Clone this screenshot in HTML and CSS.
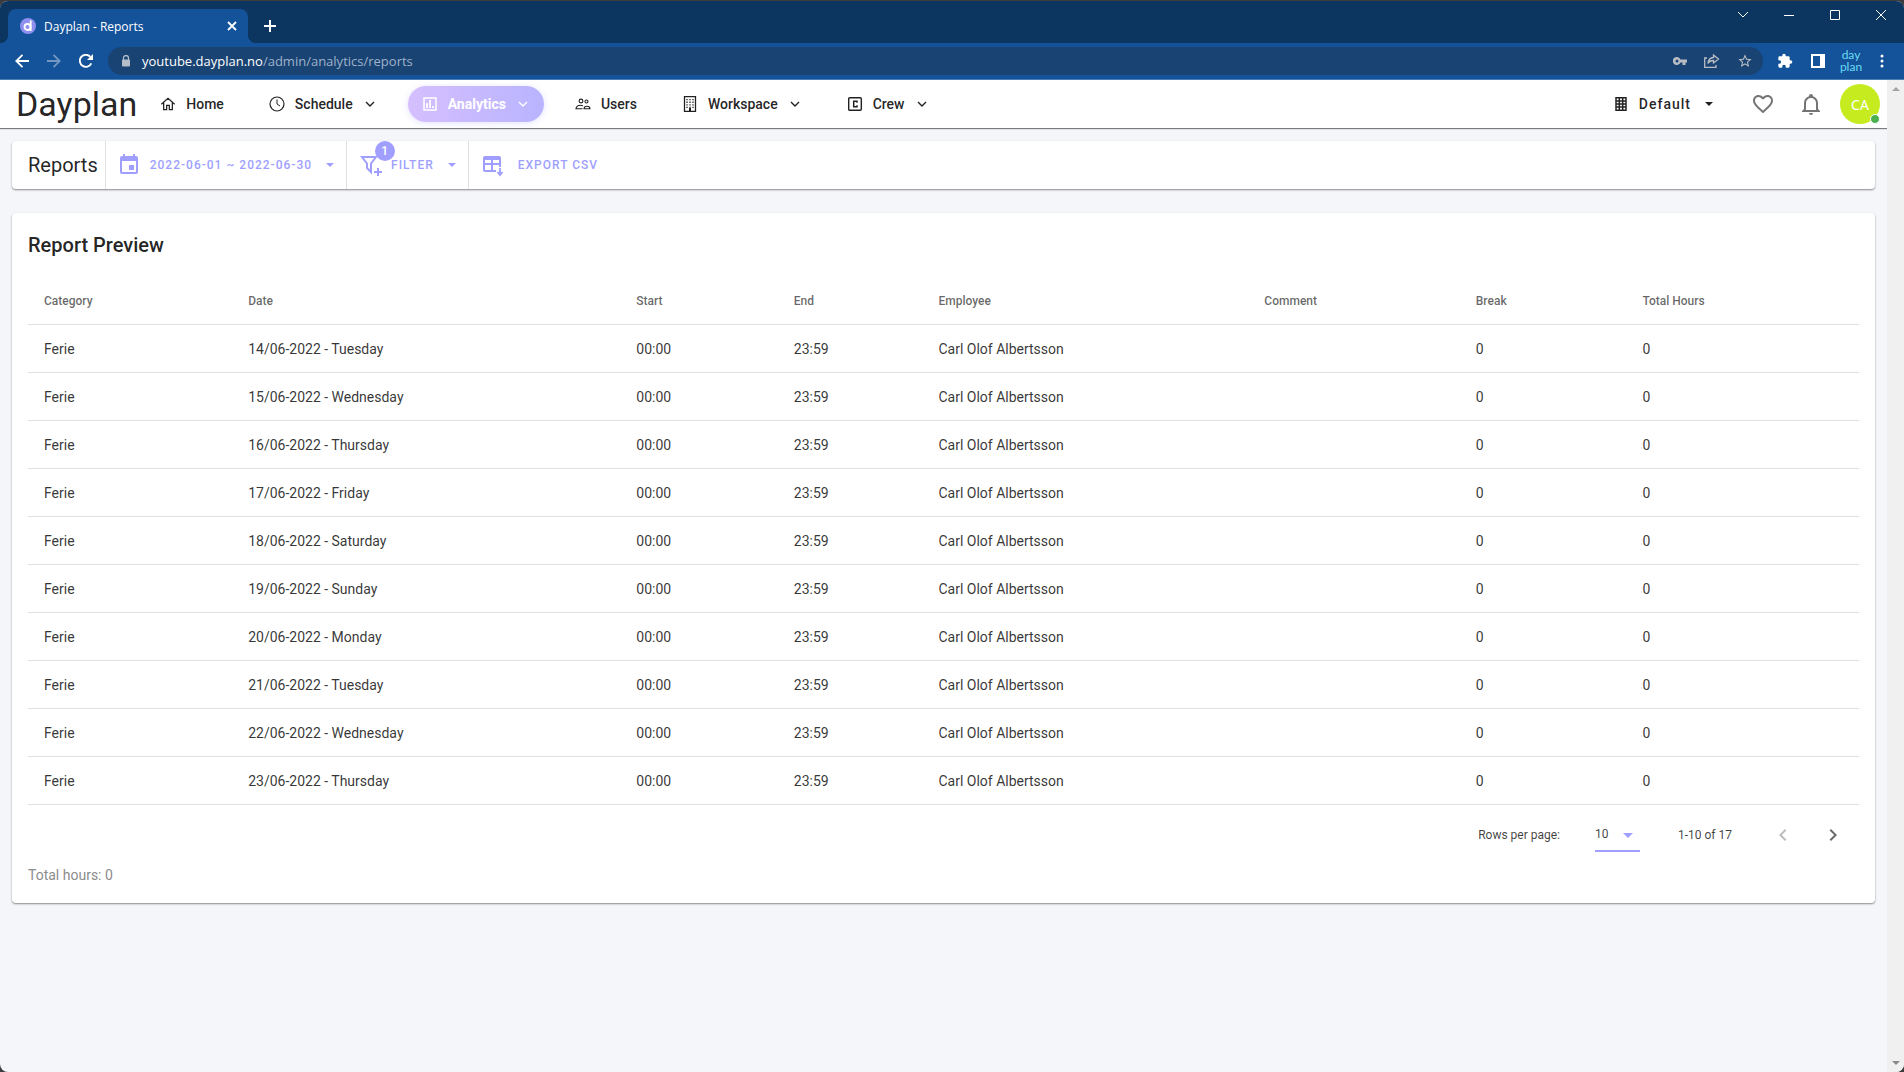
FILE: index.html
```html
<!DOCTYPE html>
<html lang="en">

<head>
    <meta charset="UTF-8">
    <meta name="viewport" content="width=device-width, initial-scale=1.0">
    <title>Dayplan - Reports</title>
    <link rel="stylesheet" href="styles.css">
</head>

<body>
    <div class="window">
        <!-- Browser tabs -->
        <div class="tab-strip">
            <div class="tab">
                <svg class="favicon" viewBox="0 0 16 16"><circle cx="8" cy="8" r="8" fill="#8f8ff0"/><circle cx="7.500" cy="9" r="3" fill="none" stroke="#fff" stroke-width="1.800"/><path d="M10.700 2.500v10.500" stroke="#fff" stroke-width="1.800"/></svg>
                <span class="tab-title">Dayplan - Reports</span>
                <button class="chrome-btn tab-close" aria-label="Close tab"><svg width="10" height="10" viewBox="0 0 10 10"><path d="M1 1l8 8M9 1l-8 8" stroke="currentColor" stroke-width="1.800"/></svg></button>
            </div>
            <button class="chrome-btn new-tab" aria-label="New tab"><svg width="12" height="12" viewBox="0 0 12 12"><path d="M6 0v12M0 6h12" stroke="currentColor" stroke-width="2"/></svg></button>
            <div class="window-controls">
                <button class="chrome-btn" aria-label="Search tabs"><svg width="12" height="12" viewBox="0 0 12 12"><path d="M1 3l5 5 5-5" fill="none" stroke="currentColor"/></svg></button>
                <button class="chrome-btn" aria-label="Minimize"><svg width="10" height="10" viewBox="0 0 10 10"><path d="M0 5.500h10" stroke="currentColor"/></svg></button>
                <button class="chrome-btn" aria-label="Maximize"><svg width="10" height="10" viewBox="0 0 10 10"><path d="M.5.5h9v9h-9z" fill="none" stroke="currentColor"/></svg></button>
                <button class="chrome-btn" aria-label="Close"><svg width="10" height="10" viewBox="0 0 10 10"><path d="M0 0l10 10M10 0L0 10" stroke="currentColor"/></svg></button>
            </div>
        </div>

        <!-- Address bar -->
        <div class="browser-bar">
            <button class="chrome-btn" aria-label="Back"><svg width="14" height="14" viewBox="0 0 14 14"><path d="M14 7H1.500M7.500.8L1.300 7l6.200 6.200" fill="none" stroke="currentColor" stroke-width="1.800"/></svg></button>
            <button class="chrome-btn faded" aria-label="Forward"><svg width="14" height="14" viewBox="0 0 14 14"><path d="M0 7h12.500M6.500.8L12.700 7l-6.200 6.200" fill="none" stroke="currentColor" stroke-width="1.800"/></svg></button>
            <button class="chrome-btn" aria-label="Reload"><svg width="14" height="14" viewBox="0 0 14 14"><path d="M12.300 9.300A6 6 0 1 1 11.300 2.800" fill="none" stroke="currentColor" stroke-width="1.900"/><path d="M14 0v6H8z" fill="currentColor"/></svg></button>
            <div class="address">
                <svg width="10" height="12" viewBox="0 0 10 12"><path d="M2.500 5V3a2.500 2.500 0 0 1 5 0v2" fill="none" stroke="#b4bdc8" stroke-width="1.300"/><rect x="1" y="4.500" width="8" height="7" rx="1" fill="#b4bdc8"/></svg>
                <span class="url"><b>youtube.dayplan.no</b>/admin/analytics/reports</span>
                <div class="address-icons">
                    <button class="chrome-btn" aria-label="Passwords"><svg width="14" height="8" viewBox="0 0 14 8"><path fill="currentColor" fill-rule="evenodd" d="M7.500 2.500A4 4 0 1 0 7.500 5.500H9.500V8h3V5.500H14v-3zM4 2.500a1.500 1.500 0 1 1 0 3 1.500 1.500 0 0 1 0-3z"/></svg></button>
                    <button class="chrome-btn" aria-label="Share"><svg width="16" height="14" viewBox="0 0 16 14"><path d="M3 4H.7v9.300H12V11M9.500 1l5 4-5 4V6.500Q5.500 6.500 4 9.500 4.500 3.800 9.500 3.500z" fill="none" stroke="currentColor" stroke-width="1.300"/></svg></button>
                    <button class="chrome-btn" aria-label="Bookmark"><svg width="16" height="16" viewBox="0 0 24 24"><path fill="currentColor" d="M12 15.390l-3.760 2.270.99-4.280-3.320-2.880 4.380-.37L12 6.090l1.710 4.040 4.380.37-3.320 2.880.99 4.280M22 9.240l-7.190-.61L12 2 9.190 8.630 2 9.240l5.450 4.730L5.820 21 12 17.270 18.180 21l-1.640-7.030L22 9.240z"/></svg></button>
                </div>
            </div>
            <button class="chrome-btn ext" aria-label="Extensions"><svg width="16" height="16" viewBox="0 0 24 24"><path fill="currentColor" d="M20.500 11H19V7a2 2 0 0 0-2-2h-4V3.500a2.500 2.500 0 0 0-5 0V5H4a2 2 0 0 0-2 2v3.800h1.500a2.700 2.700 0 0 1 0 5.400H2V20a2 2 0 0 0 2 2h3.800v-1.500a2.700 2.700 0 0 1 5.400 0V22H17a2 2 0 0 0 2-2v-4h1.500a2.500 2.500 0 0 0 0-5z"/></svg></button>
            <button class="chrome-btn" aria-label="Side panel"><svg width="14" height="14" viewBox="0 0 14 14"><path fill="currentColor" fill-rule="evenodd" d="M0 0h14v14H0zM2 2v10h7V2z"/></svg></button>
            <button class="chrome-btn dayplan-ext" aria-label="Dayplan extension"><span>day</span><span>plan</span></button>
            <button class="chrome-btn" aria-label="Menu"><svg width="4" height="14" viewBox="0 0 4 14"><path d="M2 2v.01M2 7v.01M2 12v.01" stroke="currentColor" stroke-width="3" stroke-linecap="round"/></svg></button>
        </div>

        <div class="viewport">
            <div class="app">
                <header class="app-bar">
                    <div class="logo">Dayplan</div>
                    <nav class="nav">
                        <a class="nav-item" href="#"><svg class="icon-sm" viewBox="0 0 24 24"><path fill="none" stroke="currentColor" stroke-width="1.900" d="M2 12.500L12 3.500l10 9M5.500 10v10.500H10V14h4v6.500h4.500V10"/></svg>Home</a>
                        <a class="nav-item" href="#"><svg class="icon-sm" viewBox="0 0 16 16"><circle cx="8" cy="8" r="7" fill="none" stroke="currentColor" stroke-width="1.200"/><path d="M8 3.500V8l3 2" fill="none" stroke="currentColor"/></svg>Schedule<svg class="chevron" viewBox="0 0 10 6"><path d="M1 1l4 4 4-4"/></svg></a>
                        <a class="nav-item active" href="#"><svg class="icon-sm" viewBox="0 0 16 16"><path d="M2 2h12v12H2z" fill="none" stroke="currentColor" stroke-width="1.500"/><path d="M5 12V7M8 12V4M11 12v-2" stroke="currentColor" stroke-width="1.800"/></svg>Analytics<svg class="chevron" viewBox="0 0 10 6"><path d="M1 1l4 4 4-4"/></svg></a>
                        <a class="nav-item" href="#"><svg class="icon-sm" viewBox="0 0 16 16"><g fill="none" stroke="currentColor" stroke-width="1.100"><circle cx="6" cy="5" r="1.900"/><circle cx="11.500" cy="5.500" r="1.500"/><path d="M8 9.800q-1.200-.6-2.500-.6-4 0-4.500 3.500h6.500M9 12.700q0-2.500 3-2.500t3 2.500z"/></g></svg>Users</a>
                        <a class="nav-item" href="#"><svg class="icon-sm" viewBox="0 0 16 16"><path d="M2.500.700h11v14.600h-11z" fill="none" stroke="currentColor" stroke-width="1.300"/><path d="M5 3v9M8 3v9M11 3v9" stroke="currentColor" stroke-width="1.300" stroke-dasharray="1.300 1.300"/><path d="M8 12v3" stroke="currentColor" stroke-width="2"/></svg>Workspace<svg class="chevron" viewBox="0 0 10 6"><path d="M1 1l4 4 4-4"/></svg></a>
                        <a class="nav-item" href="#"><svg class="icon-sm" viewBox="0 0 16 16"><rect x="1.700" y="1.700" width="12.600" height="12.600" rx="1" fill="none" stroke="currentColor" stroke-width="1.400"/><path d="M10 6.800V5.200H6.700v5.600H10V9.200" fill="none" stroke="currentColor" stroke-width="1.500"/></svg>Crew<svg class="chevron" viewBox="0 0 10 6"><path d="M1 1l4 4 4-4"/></svg></a>
                    </nav>
                    <div class="app-actions">
                        <button class="workspace-btn"><svg width="12" height="14" viewBox="0 0 12 14"><path fill="none" stroke="currentColor" stroke-width="1.500" d="M1 .8h10v12.400H1zM4.300 1v12M7.700 1v12M1 4h10M1 7h10M1 10h10"/></svg>Default<svg class="caret dark" viewBox="0 0 8 4"><path d="M0 0h8L4 4z"/></svg></button>
                        <button class="icon-btn" aria-label="Favorites"><svg width="24" height="24" viewBox="0 0 24 24"><path fill="currentColor" d="M12.100 18.550l-.100.100-.110-.100C7.140 14.240 4 11.390 4 8.500 4 6.500 5.500 5 7.500 5c1.540 0 3.040 1 3.570 2.360h1.860C13.460 6 14.960 5 16.500 5c2 0 3.500 1.500 3.500 3.500 0 2.890-3.140 5.740-7.900 10.050M16.500 3c-1.740 0-3.410.810-4.500 2.080C10.910 3.810 9.240 3 7.500 3 4.420 3 2 5.410 2 8.500c0 3.770 3.400 6.860 8.550 11.530L12 21.350l1.450-1.320C18.600 15.360 22 12.270 22 8.500 22 5.410 19.580 3 16.500 3z"/></svg></button>
                        <button class="icon-btn" aria-label="Notifications"><svg width="24" height="24" viewBox="0 0 24 24"><path fill="currentColor" d="M10 21h4a2 2 0 0 1-4 0m11-2v1H3v-1l2-2v-6c0-3.100 2.030-5.830 5-6.710V4a2 2 0 0 1 4 0v.29c2.970.88 5 3.610 5 6.710v6l2 2m-4-8a5 5 0 0 0-10 0v7h10v-7z"/></svg></button>
                        <button class="avatar" aria-label="Account">CA<span class="status"></span></button>
                    </div>
                </header>

                <main class="content">
                    <section class="toolbar">
                        <h1 class="toolbar-title">Reports</h1>
                        <button class="tool-btn date-btn"><svg width="24" height="24" viewBox="0 0 24 24"><path fill="currentColor" d="M19 19H5V8h14m-3-7v2H8V1H6v2H5a2 2 0 0 0-2 2v14a2 2 0 0 0 2 2h14a2 2 0 0 0 2-2V5a2 2 0 0 0-2-2h-1V1m-1 11h-5v5h5v-5z"/></svg>2022-06-01 ~ 2022-06-30<svg class="caret" viewBox="0 0 8 4"><path d="M0 0h8L4 4z"/></svg></button>
                        <button class="tool-btn filter-btn">
                            <span class="badge-wrap"><svg width="24" height="24" viewBox="0 0 24 24"><path fill="none" stroke="currentColor" stroke-width="2" d="M3 4h14l-5 6.500V19l-4-4v-4.500z"/><path d="M19 15v8M15 19h8" stroke="currentColor" stroke-width="2"/></svg><span class="badge">1</span></span>FILTER<svg class="caret" viewBox="0 0 8 4"><path d="M0 0h8L4 4z"/></svg></button>
                        <button class="tool-btn export-btn"><svg width="24" height="24" viewBox="0 0 24 24"><path fill="currentColor" fill-rule="evenodd" d="M4 3h14a2 2 0 0 1 2 2v9h-2v-2h-6v5h3v2H4a2 2 0 0 1-2-2V5a2 2 0 0 1 2-2zm0 4v3h6V7zm8 0v3h6V7zM4 12v5h6v-5z"/><path d="M19 15v6M16.500 19l2.500 3 2.500-3" fill="none" stroke="currentColor" stroke-width="1.800"/></svg>EXPORT CSV</button>
                    </section>

                    <section class="card">
                        <h2 class="card-title">Report Preview</h2>
                        <table class="report-table">
                            <thead>
                                <tr><th class="col-category">Category</th><th class="col-date">Date</th><th class="col-start">Start</th><th class="col-end">End</th><th class="col-employee">Employee</th><th class="col-comment">Comment</th><th class="col-break">Break</th><th class="col-total">Total Hours</th></tr>
                            </thead>
                            <tbody>
                                <tr><td>Ferie</td><td>14/06-2022 - Tuesday</td><td>00:00</td><td>23:59</td><td>Carl Olof Albertsson</td><td></td><td>0</td><td>0</td></tr>
                                <tr><td>Ferie</td><td>15/06-2022 - Wednesday</td><td>00:00</td><td>23:59</td><td>Carl Olof Albertsson</td><td></td><td>0</td><td>0</td></tr>
                                <tr><td>Ferie</td><td>16/06-2022 - Thursday</td><td>00:00</td><td>23:59</td><td>Carl Olof Albertsson</td><td></td><td>0</td><td>0</td></tr>
                                <tr><td>Ferie</td><td>17/06-2022 - Friday</td><td>00:00</td><td>23:59</td><td>Carl Olof Albertsson</td><td></td><td>0</td><td>0</td></tr>
                                <tr><td>Ferie</td><td>18/06-2022 - Saturday</td><td>00:00</td><td>23:59</td><td>Carl Olof Albertsson</td><td></td><td>0</td><td>0</td></tr>
                                <tr><td>Ferie</td><td>19/06-2022 - Sunday</td><td>00:00</td><td>23:59</td><td>Carl Olof Albertsson</td><td></td><td>0</td><td>0</td></tr>
                                <tr><td>Ferie</td><td>20/06-2022 - Monday</td><td>00:00</td><td>23:59</td><td>Carl Olof Albertsson</td><td></td><td>0</td><td>0</td></tr>
                                <tr><td>Ferie</td><td>21/06-2022 - Tuesday</td><td>00:00</td><td>23:59</td><td>Carl Olof Albertsson</td><td></td><td>0</td><td>0</td></tr>
                                <tr><td>Ferie</td><td>22/06-2022 - Wednesday</td><td>00:00</td><td>23:59</td><td>Carl Olof Albertsson</td><td></td><td>0</td><td>0</td></tr>
                                <tr><td>Ferie</td><td>23/06-2022 - Thursday</td><td>00:00</td><td>23:59</td><td>Carl Olof Albertsson</td><td></td><td>0</td><td>0</td></tr>
                            </tbody>
                        </table>
                        <div class="table-footer">
                            <label for="rows">Rows per page:</label>
                            <div class="select-wrap">
                                <select id="rows" class="rows-select">
                                    <option>10</option>
                                    <option>25</option>
                                    <option>50</option>
                                </select>
                                <svg class="select-caret" viewBox="0 0 10 5"><path d="M0 0h10L5 5z"/></svg>
                            </div>
                            <span class="range">1-10 of 17</span>
                            <button class="page-btn" aria-label="Previous page" disabled><svg width="24" height="24" viewBox="0 0 24 24"><path fill="currentColor" d="M15.410 16.580L10.830 12l4.580-4.590L14 6l-6 6 6 6 1.410-1.420z"/></svg></button>
                            <button class="page-btn" aria-label="Next page"><svg width="24" height="24" viewBox="0 0 24 24"><path fill="currentColor" d="M8.590 16.580L13.170 12 8.590 7.410 10 6l6 6-6 6-1.410-1.420z"/></svg></button>
                        </div>
                        <p class="total">Total hours: 0</p>
                    </section>
                </main>
            </div>
            <div class="scrollbar">
                <svg width="8" height="4" viewBox="0 0 8 4"><path d="M0 4h8L4 0z" fill="#a3a3a3"/></svg>
                <svg width="8" height="4" viewBox="0 0 8 4"><path d="M0 0h8L4 4z" fill="#8a8a8a"/></svg>
            </div>
        </div>
    </div>
</body>

</html>
```
FILE: styles.css
```css
* {
    box-sizing: border-box;
}

body {
    margin: 0;
    background: #3c3c3c;
    color: rgba(0, 0, 0, 0.87);
    font-family: Roboto, sans-serif;
    font-size: 14px;
}

button {
    border: 0;
    padding: 0;
    background: none;
    color: inherit;
    font: inherit;
    display: flex;
    align-items: center;
}

svg {
    flex: none;
}

.window {
    display: flex;
    flex-direction: column;
    min-height: 100vh;
    border-radius: 8px;
    border-top: 1px solid #3c3c3c;
    overflow: hidden;
    background: #f5f6fa;
}

/* Browser frame */
.tab-strip {
    display: flex;
    align-items: center;
    height: 42px;
    padding-left: 8px;
    background: #0c355f;
    color: #fff;
}

.tab {
    position: relative;
    display: flex;
    align-items: center;
    align-self: flex-end;
    width: 240px;
    height: 34px;
    padding: 0 11px 0 12px;
    border-radius: 8px 8px 0 0;
    background: #14529a;
    font: 12px "Open Sans", sans-serif;
}

/* Curved feet of the tab */
.tab::before,
.tab::after {
    content: "";
    position: absolute;
    bottom: 0;
    width: 8px;
    height: 8px;
}

.tab::before {
    right: 100%;
    background: radial-gradient(circle at 0 0, transparent 8px, #14529a 8px);
}

.tab::after {
    left: 100%;
    background: radial-gradient(circle at 100% 0, transparent 8px, #14529a 8px);
}

.favicon {
    width: 16px;
    height: 16px;
    margin-right: 8px;
}

.tab-title {
    flex: 1;
}

.new-tab {
    margin-left: 16px;
    margin-top: 8px;
}

.window-controls {
    display: flex;
    align-self: flex-start;
    margin-left: auto;
}

.window-controls .chrome-btn {
    justify-content: center;
    width: 46px;
    height: 28px;
}

.browser-bar {
    display: flex;
    align-items: center;
    height: 37px;
    padding: 0 20px 0 15px;
    gap: 18px;
    background: #14529a;
    border-bottom: 1px solid #4a7db5;
    color: #fff;
}

.faded {
    color: #7397c2;
}

.address {
    display: flex;
    align-items: center;
    flex: 1;
    height: 28px;
    margin-left: -3px;
    padding: 0 10px 0 13px;
    border-radius: 14px;
    background: #194373;
    color: #9fb2c9;
}

.url {
    margin-left: 11px;
    font: 13px "Open Sans", sans-serif;
}

.url b {
    color: #fff;
    font-weight: 400;
}

.address-icons {
    display: flex;
    align-items: center;
    gap: 17px;
    margin-left: auto;
    color: #b9bdc3;
}

.ext {
    margin-left: -4px;
}

.dayplan-ext {
    flex-direction: column;
    width: 22px;
    margin: 0 0 0 -3px;
    color: #6adcf5;
    font: 12px/12px Lato, sans-serif;
}

/* App */
.viewport {
    display: flex;
    flex: 1;
}

.app {
    flex: 1;
    min-width: 0;
}

.scrollbar {
    display: flex;
    flex-direction: column;
    align-items: center;
    justify-content: space-between;
    width: 17px;
    padding: 7px 0;
    background: #f0f0f0;
}

.app-bar {
    display: flex;
    align-items: center;
    height: 48px;
    padding: 0 7px 0 16px;
    background: #fff;
    box-shadow: 0 1px 1px rgba(0, 0, 0, 0.5);
}

.logo {
    font-size: 34px;
    line-height: 48px;
}

.nav {
    display: flex;
    align-items: center;
    gap: 17px;
    margin-left: 9px;
}

.nav-item {
    display: flex;
    align-items: center;
    height: 36px;
    padding: 0 14px;
    border-radius: 18px;
    color: inherit;
    font-weight: 500;
    text-decoration: none;
}

.icon-sm {
    width: 16px;
    height: 16px;
    margin-right: 10px;
}

.chevron {
    width: 10px;
    height: 6px;
    margin: 0 2px 0 12px;
    fill: none;
    stroke: currentColor;
    stroke-width: 1.4;
}

.nav-item.active {
    background: linear-gradient(90deg, #d5bffe, #b9b4ff);
    box-shadow: 0 1px 6px rgba(185, 180, 255, 0.4);
    color: #fff;
    font-weight: 700;
}

.app-actions {
    display: flex;
    align-items: center;
    margin-left: auto;
}

.workspace-btn {
    gap: 12px;
    margin-right: 38px;
    letter-spacing: 1px;
    font-weight: 500;
}

.caret {
    width: 8px;
    height: 4px;
    margin-left: 5px;
    fill: currentColor;
}

.caret.dark {
    margin-left: 2px;
}

.icon-btn {
    margin-right: 24px;
    color: #757575;
}

.avatar {
    position: relative;
    justify-content: center;
    width: 40px;
    height: 40px;
    margin-left: -7px;
    border-radius: 50%;
    background: #c6ec1f;
    color: #fff;
    font: 14px "Noto Sans", sans-serif;
}

.status {
    position: absolute;
    right: 0;
    bottom: 0;
    width: 10px;
    height: 10px;
    border: 1px solid #fff;
    border-radius: 50%;
    background: #4caf50;
}

.content {
    padding: 13px 12px;
}

.toolbar,
.card {
    border-radius: 4px;
    background: #fff;
    box-shadow: 0 1px 2px rgba(0, 0, 0, 0.45);
}

.toolbar {
    display: flex;
    height: 48px;
}

.toolbar-title {
    margin: 0;
    padding: 0 7px 0 16px;
    font-size: 20px;
    font-weight: 400;
    line-height: 48px;
}

.tool-btn {
    border-left: 1px solid #e0e0e0;
    color: #a09fff;
    font-size: 12px;
    font-weight: 500;
    letter-spacing: 1px;
}

.date-btn {
    gap: 9px;
    padding: 0 12px 0 11px;
}

.filter-btn {
    gap: 8px;
    padding: 0 12px;
}

.filter-btn .caret {
    margin-left: 6px;
}

.export-btn {
    gap: 13px;
    padding: 0 12px;
}

.badge-wrap {
    position: relative;
    display: flex;
}

.badge {
    position: absolute;
    left: 16px;
    top: -12px;
    width: 20px;
    height: 20px;
    border-radius: 50%;
    background: #a09fff;
    color: #fff;
    line-height: 20px;
    text-align: center;
}

.card {
    margin-top: 24px;
    padding: 16px 16px 18px;
}

.card-title {
    margin: 0 0 16px;
    font-size: 20px;
    font-weight: 500;
    line-height: 32px;
}

/* Report table */
.report-table {
    width: 100%;
    table-layout: fixed;
    border-collapse: separate;
    border-spacing: 0;
}

.report-table th,
.report-table td {
    height: 48px;
    padding: 0 16px;
    border-bottom: 1px solid #e0e0e0;
    text-align: left;
}

.report-table td {
    color: rgba(0, 0, 0, 0.8);
}

.report-table th {
    color: rgba(0, 0, 0, 0.6);
    font-size: 12px;
    font-weight: 500;
}

.col-category { width: 11.15%; }
.col-date { width: 21.2%; }
.col-start { width: 8.6%; }
.col-end { width: 7.9%; }
.col-employee { width: 17.8%; }
.col-comment { width: 11.55%; }
.col-break { width: 9.1%; }
.col-total { width: 12.7%; }

.table-footer {
    display: flex;
    align-items: center;
    justify-content: flex-end;
    height: 60px;
    padding-right: 14px;
    color: rgba(0, 0, 0, 0.75);
    font-size: 12px;
}

.select-wrap {
    position: relative;
    margin: 0 38px 0 35px;
}

.rows-select {
    appearance: none;
    width: 45px;
    height: 33px;
    padding: 0;
    border: 0;
    border-bottom: 2px solid #a09fff;
    background: none;
    color: inherit;
    font: 12px Roboto, sans-serif;
}

.select-caret {
    position: absolute;
    right: 7px;
    top: 14px;
    width: 10px;
    height: 5px;
    fill: #a09fff;
    pointer-events: none;
}

.range {
    margin-right: 39px;
}

.page-btn {
    color: #6b6b6b;
}

.page-btn + .page-btn {
    margin-left: 26px;
}

.page-btn:disabled {
    color: #bdbdbd;
}

.total {
    margin: 0;
    color: #8c8c8c;
    line-height: 20px;
}
```
